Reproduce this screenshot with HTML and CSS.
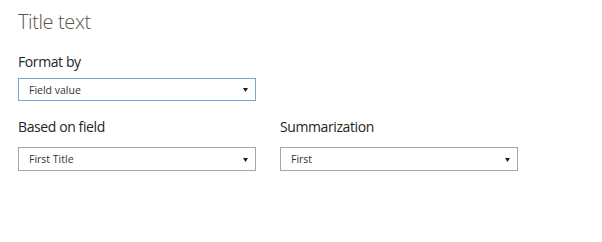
FILE: index.html
```html
<!DOCTYPE html>
<html>
<head>
    <meta charset="utf-8">
    <title>Title text</title>
    <link rel="stylesheet" href="styles.css">
</head>
<body>

<div class="pane">
    <div class="pane-title">Title text</div>

    <div class="field">
        <div class="field-label">Format by</div>
        <div class="dropdown focused">
            <span class="dropdown-value">Field value</span>
            <svg class="dropdown-arrow" width="5" height="4" viewBox="0 0 5 4"><path d="M0 0H5L2.5 4Z" fill="#1f1f1f"/></svg>
        </div>
    </div>

    <div class="field-row">
        <div class="field">
            <div class="field-label">Based on field</div>
            <div class="dropdown">
                <span class="dropdown-value">First Title</span>
                <svg class="dropdown-arrow" width="5" height="4" viewBox="0 0 5 4"><path d="M0 0H5L2.5 4Z" fill="#1f1f1f"/></svg>
            </div>
        </div>
        <div class="field">
            <div class="field-label">Summarization</div>
            <div class="dropdown">
                <span class="dropdown-value">First</span>
                <svg class="dropdown-arrow" width="5" height="4" viewBox="0 0 5 4"><path d="M0 0H5L2.5 4Z" fill="#1f1f1f"/></svg>
            </div>
        </div>
    </div>
</div>

</body>
</html>
```

FILE: styles.css
```css
body {
    margin: 0;
    background: #ffffff;
    font-family: "Open Sans", "Noto Sans", sans-serif;
    color: #252423;
}

.pane {
    padding: 8px 18px;
}

.pane-title {
    font-size: 20px;
    font-weight: 300;
    letter-spacing: -0.4px;
    color: #5a524b;
    line-height: 28px;
    margin-bottom: 16px;
}

.field-row {
    display: flex;
    gap: 24px;
    margin-top: 16px;
}

.field-label {
    font-size: 14px;
    letter-spacing: -0.4px;
    line-height: 20px;
    margin-bottom: 6px;
}

.field-row .field-label {
    margin-bottom: 10px;
}

.dropdown {
    width: 219px;
    height: 22px;
    border: 1px solid #a6a6a6;
    display: flex;
    align-items: center;
    justify-content: space-between;
    padding: 0 7px 0 10px;
    font-size: 10.5px;
    color: #333333;
}

.dropdown.focused {
    height: 21px;
    border-color: #7aa5d8;
}

.dropdown-arrow {
    display: block;
    margin-top: 1px;
}
```
